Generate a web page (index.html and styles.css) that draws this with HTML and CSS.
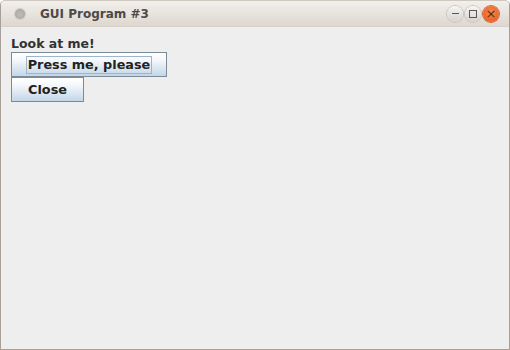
FILE: index.html
```html
<!DOCTYPE html>
<html lang="en">
<head>
    <meta charset="UTF-8">
    <title>GUI Program #3</title>
    <link rel="stylesheet" href="styles.css">
</head>
<body>
    <div class="window">
        <div class="titlebar">
            <span class="menu-dot"></span>
            <span class="title">GUI Program #3</span>
            <div class="controls">
                <span class="ctl min"></span>
                <span class="ctl max"></span>
                <span class="ctl close">&#215;</span>
            </div>
        </div>
        <div class="content">
            <div class="label">Look at me!</div>
            <button class="btn press"><span class="focus">Press me, please</span></button>
            <button class="btn close-btn">Close</button>
        </div>
    </div>
</body>
</html>
```
FILE: styles.css
```css
html, body {
    margin: 0;
    padding: 0;
    background: #ffffff;
}
.window {
    width: 510px;
    height: 350px;
    box-sizing: border-box;
    border: 1px solid #a8a097;
    border-top-color: #cfc8bf;
    border-radius: 5px 5px 0 0;
    background: #eeeeee;
    display: flex;
    flex-direction: column;
    overflow: hidden;
}
.titlebar {
    height: 25px;
    display: flex;
    align-items: center;
    background: linear-gradient(#f2f0ec, #ddd7cf);
    border-bottom: 1px solid #d6d0c8;
    font-family: "DejaVu Sans", sans-serif;
}
.menu-dot {
    width: 10px;
    height: 10px;
    margin-left: 14px;
    border-radius: 50%;
    background: radial-gradient(circle at 50% 55%, #b9b5b0 30%, #9e9a95 100%);
    box-shadow: 0 0 0 1px #cfcac4;
}
.title {
    margin-left: 15px;
    font-size: 12px;
    font-weight: bold;
    color: #4d4a46;
    padding-top: 1px;
}
.controls {
    margin-left: auto;
    margin-right: 10px;
    display: flex;
    gap: 2px;
}
.ctl {
    width: 16px;
    height: 16px;
    border-radius: 50%;
    background: linear-gradient(#f6f5f3, #d7d3ce);
    box-shadow: 0 0 0 1px #c9c4be;
    color: #5a5753;
    font-size: 11px;
    line-height: 16px;
    text-align: center;
    display: flex;
    align-items: center;
    justify-content: center;
}
.ctl.min::before {
    content: "";
    width: 7px;
    height: 1px;
    background: #5a5753;
}
.ctl.max::before {
    content: "";
    width: 6px;
    height: 6px;
    border: 1px solid #5a5753;
}
.ctl.close {
    background: radial-gradient(circle at 50% 40%, #f7874e, #e0561b);
    box-shadow: 0 0 0 1px #d7643a;
    color: #5a2a12;
    font-size: 13px;
}
.content {
    flex: 1;
    padding: 9px 10px;
    display: flex;
    flex-direction: column;
    align-items: flex-start;
    font-family: "DejaVu Sans", sans-serif;
    font-size: 12.5px;
    font-weight: bold;
    color: #333333;
}
.label {
    line-height: 15px;
    margin-bottom: 1px;
}
.btn {
    font-family: inherit;
    font-weight: bold;
    font-size: 12.8px;
    color: #222222;
    border: 1px solid #7a8a99;
    background: linear-gradient(#ffffff 0%, #f5f8fb 30%, #c3d6e8 100%);
    height: 25px;
    padding: 0;
    display: flex;
    align-items: center;
    justify-content: center;
    box-sizing: border-box;
}
.press {
    width: 156px;
}
.focus {
    border: 1px solid #9fb4c8;
    padding: 1px 1px;
    line-height: 14px;
}
.close-btn {
    width: 73px;
}
```
